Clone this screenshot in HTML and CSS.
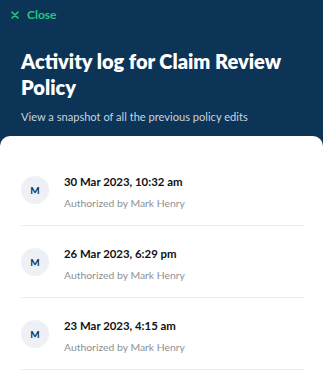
FILE: index.html
```html
<!DOCTYPE html>
<html>
<head>
<meta charset="utf-8">
<link rel="stylesheet" href="styles.css">
</head>
<body>
<div class="screen">
  <header class="header">
    <button class="close">
      <svg class="close-icon" width="8" height="8" viewBox="0 0 8 8"><path d="M1 1L7 7M7 1L1 7" stroke="#25c77f" stroke-width="1.6" stroke-linecap="round"/></svg>
      <span>Close</span>
    </button>
    <h1 class="title">Activity log for Claim Review Policy</h1>
    <p class="subtitle">View a snapshot of all the previous policy edits</p>
  </header>
  <main class="panel">
    <ul class="log">
      <li class="entry">
        <div class="avatar">M</div>
        <div class="info">
          <div class="date">30 Mar 2023, 10:32 am</div>
          <div class="author">Authorized by Mark Henry</div>
        </div>
      </li>
      <li class="entry">
        <div class="avatar">M</div>
        <div class="info">
          <div class="date">26 Mar 2023, 6:29 pm</div>
          <div class="author">Authorized by Mark Henry</div>
        </div>
      </li>
      <li class="entry">
        <div class="avatar">M</div>
        <div class="info">
          <div class="date">23 Mar 2023, 4:15 am</div>
          <div class="author">Authorized by Mark Henry</div>
        </div>
      </li>
    </ul>
  </main>
</div>
</body>
</html>
```
FILE: styles.css
```css
* { box-sizing: border-box; }
html, body { margin: 0; padding: 0; }
body {
  background: #0c3457;
  font-family: Lato, "Noto Sans", sans-serif;
  width: 323px;
  height: 389px;
  overflow: hidden;
}
.screen { display: flex; flex-direction: column; height: 389px; }
.header {
  background: #0c3457;
  padding: 7px 10px 0 11px;
  height: 136px;
}
.close {
  display: flex;
  align-items: center;
  gap: 8px;
  background: none;
  border: 0;
  padding: 0;
  color: #25c77f;
  font-family: inherit;
  font-size: 12px;
  font-weight: 700;
  height: 15px;
}
.title {
  margin: 26px 0 0 10px;
  color: #ffffff;
  font-size: 20px;
  line-height: 26px;
  font-weight: 800;
}
.subtitle {
  margin: 10px 0 0 10px;
  color: #c9d3de;
  font-size: 11.1px;
  line-height: 14px;
}
.panel {
  flex: 1;
  background: #ffffff;
  border-radius: 10px 10px 0 0;
  padding: 18px 18px 0 21px;
}
.log { list-style: none; margin: 0; padding: 0; }
.entry {
  display: flex;
  align-items: center;
  gap: 15px;
  height: 72px;
  border-bottom: 1px solid #ececef;
}
.avatar {
  width: 28px;
  height: 28px;
  border-radius: 50%;
  background: #edf1f5;
  color: #0c3457;
  font-size: 10px;
  font-weight: 700;
  display: flex;
  align-items: center;
  justify-content: center;
}
.info { display: flex; flex-direction: column; gap: 8px; margin-top: 6px; }
.date { color: #111; font-size: 11.4px; font-weight: 700; line-height: 14px; }
.author { color: #8c9096; font-size: 10.4px; line-height: 13px; }
```
